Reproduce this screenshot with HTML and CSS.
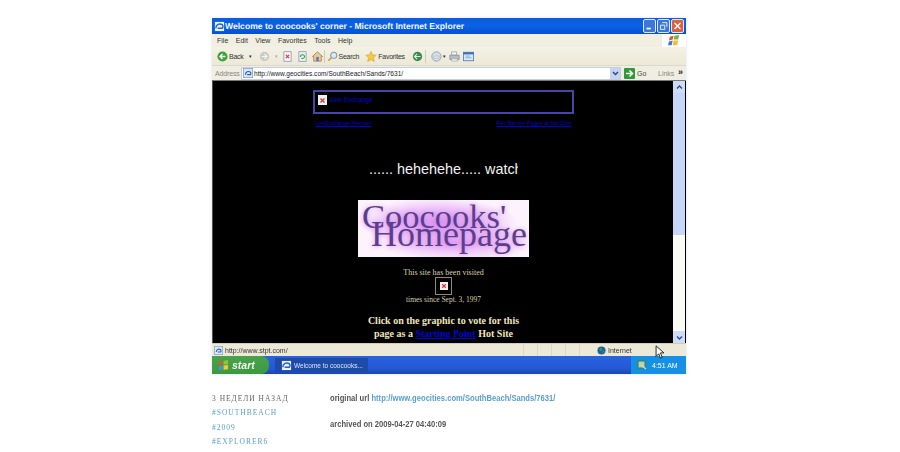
FILE: index.html
```html
<!DOCTYPE html>
<html lang="en">
<head>
<meta charset="utf-8">
<title>Welcome to coocooks' corner</title>
<link rel="stylesheet" href="styles.css">
</head>
<body>
<main class="post">
  <section class="window">
    <header class="titlebar">
      <svg class="ie ie-title" viewBox="0 0 12 12"><rect x="1" y="1" width="10" height="10" fill="#e8f0fa"/><path d="M2 8c0-4 4-6 7-4 1 1 1 3 0 4H4" fill="none" stroke="#2a62b8" stroke-width="1.6"/></svg>
      <span class="title-text">Welcome to coocooks' corner - Microsoft Internet Explorer</span>
      <span class="winbtns">
        <span class="winbtn"><svg viewBox="0 0 13 13"><rect x="3" y="8.5" width="5" height="2" fill="#fff"/></svg></span>
        <span class="winbtn"><svg viewBox="0 0 13 13"><path d="M5 2.500h5.500v5M3 5.500h5v5H3z" fill="none" stroke="#fff"/></svg></span>
        <span class="winbtn close"><svg viewBox="0 0 13 13"><path d="M3 3l7 7M10 3l-7 7" stroke="#fff" stroke-width="1.7"/></svg></span>
      </span>
    </header>
    <nav class="menubar">
      <span class="menu">File</span><span class="menu">Edit</span><span class="menu">View</span><span class="menu">Favorites</span><span class="menu">Tools</span><span class="menu">Help</span>
      <span class="flagbox"><svg viewBox="0 0 14 14"><path d="M2 3l4-1-1 4-4 1z" fill="#e2572a"/><path d="M7 2l5-1-1 5-5 0z" fill="#7cb53c"/><path d="M1 8l4-1-1 5-4 0z" fill="#3f7ad0"/><path d="M6 7l5 0-1 5-5 0z" fill="#f0c030"/></svg></span>
    </nav>
    <div class="toolbar">
      <svg class="tool-ic" viewBox="0 0 13 13"><circle cx="6.500" cy="6.500" r="6" fill="#3da23a"/><path d="M10 6.500H4M6.500 3.500l-3 3 3 3" fill="none" stroke="#fff" stroke-width="1.600"/></svg>
      <span class="tool-label back-label">Back</span><span class="caret back-caret">▾</span>
      <svg class="tool-ic fwd" viewBox="0 0 13 13"><circle cx="6.500" cy="6.500" r="5.500" fill="#c9cbc6"/><path d="M3 6.500h6M6.500 3.500l3 3-3 3" fill="none" stroke="#f4f4f0" stroke-width="1.400"/></svg>
      <span class="caret dim">▾</span>
      <svg class="tool-ic doc stop" viewBox="0 0 11 13"><path d="M1 .5h9v12H1z" fill="#f4f3f6" stroke="#8d9ab8"/><path d="M3.500 4.500l4 4M7.500 4.500l-4 4" stroke="#d83838" stroke-width="1.400"/></svg>
      <svg class="tool-ic doc refresh" viewBox="0 0 11 13"><path d="M1 .5h9v12H1z" fill="#e8f0ea" stroke="#8d9ab8"/><path d="M3 7a2.600 2.600 0 0 1 5-1M8 6a2.600 2.600 0 0 1-4 2.500" fill="none" stroke="#2f9c48" stroke-width="1.300"/></svg>
      <svg class="tool-ic home" viewBox="0 0 13 13"><path d="M.5 6.500 6.500 1l6 5.500H11V12H2V6.500z" fill="#e9c9a0" stroke="#b87b45"/><rect x="5" y="7" width="3" height="5" fill="#4d7fc4"/></svg>
      <i class="sep sep-a"></i>
      <svg class="tool-ic search" viewBox="0 0 13 13"><circle cx="8" cy="5" r="3.600" fill="#dbe9f6" stroke="#7b93b5" stroke-width="1.200"/><path d="M5.500 7.500L1.500 11.500" stroke="#c8a24e" stroke-width="2"/></svg>
      <span class="tool-label">Search</span>
      <svg class="tool-ic star" viewBox="0 0 13 13"><path d="M6.500.5l1.900 4 4.300.5-3.200 3 .9 4.400-3.900-2.200-3.900 2.200.9-4.400-3.200-3 4.300-.5z" fill="#f4cc3a" stroke="#c9982a" stroke-width=".6"/></svg>
      <span class="tool-label">Favorites</span>
      <svg class="tool-ic media" viewBox="0 0 13 13"><circle cx="6.500" cy="6.500" r="5.500" fill="#3f8a50"/><path d="M3 6.500h7M6 3.500l-3 3 3 3" fill="none" stroke="#dfeedd" stroke-width="1.300"/></svg>
      <i class="sep sep-b"></i>
      <svg class="tool-ic mail" viewBox="0 0 13 13"><circle cx="6.500" cy="6.500" r="5.500" fill="#d6dfe8" stroke="#8b9ab0"/><path d="M3.500 6h6v2.500h-6z" fill="#f6f2e4" stroke="#94a2b8" stroke-width=".6"/></svg>
      <span class="caret mail-caret">▾</span>
      <svg class="tool-ic print" viewBox="0 0 13 13"><path d="M3 1h6v4H3z" fill="#f4f4f4" stroke="#a0a8b4"/><path d="M1 5h11v5H1z" fill="#b8bcc6" stroke="#8a8f9b"/><path d="M3 9h7v3H3z" fill="#e9e9e9" stroke="#9a9a9a" stroke-width=".6"/></svg>
      <svg class="tool-ic edit" viewBox="0 0 13 13"><rect x=".5" y="1.500" width="12" height="10" fill="#dbe7f5" stroke="#4f7cb8"/><rect x=".5" y="1.500" width="12" height="2.500" fill="#3a6fbc"/><path d="M3 6h5M3 8h7" stroke="#7fa0ca"/></svg>
    </div>
    <div class="addressbar">
      <span class="addr-label">Address</span>
      <div class="addr-field">
        <svg class="ie ie-addr" viewBox="0 0 12 12"><rect x=".5" y=".5" width="11" height="11" fill="#dbe8f8" stroke="#8aa5cc"/><path d="M3 8c0-3 3-5 6-3 .6 1 .5 2 0 3H5" fill="none" stroke="#2a62b8" stroke-width="1.400"/></svg>
        <span class="addr-url">http://www.geocities.com/SouthBeach/Sands/7631/</span>
        <span class="addr-drop"><svg viewBox="0 0 9 9"><path d="M2 3l2.500 2.500L7 3" fill="none" stroke="#2b4a8a" stroke-width="1.500"/></svg></span>
      </div>
      <svg class="go-ic" viewBox="0 0 11 11"><rect width="11" height="11" rx="1" fill="#2f9a3a"/><path d="M2 5.500h6M5.500 2.500l3 3-3 3" fill="none" stroke="#fff" stroke-width="1.500"/></svg>
      <span class="go-label">Go</span>
      <span class="links">Links</span>
      <span class="chev">»</span>
    </div>
    <div class="viewport">
      <div class="page">
        <div class="banner">
          <span class="broken"><svg viewBox="0 0 9 9"><path d="M2.500 2.500l4 4M6.500 2.500l-4 4" stroke="#e2303a" stroke-width="1.300"/></svg></span>
          <a class="link small" href="#">Link Exchange</a>
        </div>
        <div class="banner-links">
          <a class="link tiny" href="#">LinkExchange Member</a>
          <a class="link tiny" href="#">Rev Banner Pages at Sw Click</a>
        </div>
        <p class="marquee">...... hehehehe..... watch</p>
        <div class="logo">
          <span class="logo-a">Coocooks'</span>
          <span class="logo-b">Homepage</span>
        </div>
        <p class="visited">This site has been visited</p>
        <span class="counter"><span class="broken inner"><svg viewBox="0 0 9 9"><path d="M2.500 2.500l4 4M6.500 2.500l-4 4" stroke="#e2303a" stroke-width="1.300"/></svg></span></span>
        <p class="since">times since Sept. 3, 1997</p>
        <p class="vote">Click on the graphic to vote for this<br>page as a <a class="link" href="#">Starting Point</a> Hot Site</p>
      </div>
      <aside class="scrollbar">
        <span class="sb-btn"><svg viewBox="0 0 9 9"><path d="M2 5.500L4.500 3 7 5.500" fill="none" stroke="#2b4a8a" stroke-width="1.400"/></svg></span>
        <span class="sb-thumb"></span>
        <span class="sb-track"></span>
        <span class="sb-btn"><svg viewBox="0 0 9 9"><path d="M2 3.500L4.500 6 7 3.500" fill="none" stroke="#2b4a8a" stroke-width="1.400"/></svg></span>
      </aside>
    </div>
    <footer class="statusbar">
      <svg class="ie ie-status" viewBox="0 0 12 12"><rect x=".5" y=".5" width="11" height="11" fill="#dbe8f8" stroke="#8aa5cc"/><path d="M3 8c0-3 3-5 6-3 .6 1 .5 2 0 3H5" fill="none" stroke="#2a62b8" stroke-width="1.400"/></svg>
      <span class="status-url">http://www.stpt.com/</span>
      <span class="panes"><i></i><i></i><i></i><i></i><i></i></span>
      <svg class="globe" viewBox="0 0 10 10"><circle cx="5" cy="5" r="4.500" fill="#1f5fa8"/><path d="M2 3l3-1 1 2-2 2zM6 6l2-1 0 2-2 1z" fill="#3c9a40"/></svg>
      <span class="zone">Internet</span>
      <svg class="cursor" viewBox="0 0 11 16"><path d="M1 1v12l3-3 2 5 2-1-2-5h4z" fill="#fff" stroke="#111" stroke-width="1"/></svg>
    </footer>
    <div class="taskbar">
      <span class="start"><svg viewBox="0 0 12 12"><path d="M1 2l4-1v4l-4 .5z" fill="#e2572a"/><path d="M6 1l5-1v4.500l-5 .5z" fill="#8cc63f"/><path d="M1 6.500l4-.5v4.500l-4 .5z" fill="#4a8fe0"/><path d="M6 6l5-.5V10l-5 .5z" fill="#f6c732"/></svg><span class="start-label">start</span></span>
      <span class="task"><svg class="ie ie-task" viewBox="0 0 12 12"><rect x="1" y="1" width="10" height="10" fill="#e8f0fa"/><path d="M2 8c0-4 4-6 7-4 1 1 1 3 0 4H4" fill="none" stroke="#2a62b8" stroke-width="1.600"/></svg><span class="task-label">Welcome to coocooks...</span></span>
      <span class="tray"><svg viewBox="0 0 10 10"><rect x="1" y="1" width="7" height="7" fill="#b9d4a8" stroke="#3f7a4a"/><path d="M4 5l5 4" stroke="#d8d8d0" stroke-width="1.500"/></svg><span class="clock">4:51 AM</span></span>
    </div>
  </section>
  <section class="meta">
    <ul class="tags">
      <li class="age">3 НЕДЕЛИ НАЗАД</li>
      <li><a class="tag" href="#">#SOUTHBEACH</a></li>
      <li><a class="tag" href="#">#2009</a></li>
      <li><a class="tag" href="#">#EXPLORER6</a></li>
    </ul>
    <div class="caption">
      <p class="caption-line">original url <a class="url" href="#">http://www.geocities.com/SouthBeach/Sands/7631/</a></p>
      <p class="caption-line">archived on 2009-04-27 04:40:09</p>
    </div>
  </section>
</main>
</body>
</html>
```
FILE: styles.css
```css
html, body { margin: 0; padding: 0; background: #fff; }
body { height: 452px; overflow: hidden; }
p { margin: 0; }
svg { display: block; flex: none; }
a { color: inherit; }

.post { width: 474px; margin-left: 212px; padding-top: 18px; }

.window {
  width: 474px; height: 356px;
  display: flex; flex-direction: column;
  font-family: "Liberation Sans", sans-serif;
  box-shadow: 0 0 3px rgba(90,110,150,.22);
  filter: blur(.4px);
}

/* title bar */
.titlebar {
  height: 16px; flex: none; display: flex; align-items: center; padding: 0 2px 0 2px;
  background: linear-gradient(#0a5ee0, #0a62e4 50%, #0550d0);
}
.ie-title { width: 11px; height: 11px; }
.title-text {
  margin-left: 0; color: #f2f6ff; font: bold 8.600px "Liberation Sans", sans-serif;
  white-space: nowrap; text-rendering: geometricPrecision;
}
.winbtns { margin-left: auto; display: flex; gap: 1px; }
.winbtn {
  width: 13px; height: 14px; box-sizing: border-box; border: 1px solid #dfe8f8; border-radius: 2px;
  background: #3c78dc;
}
.winbtn svg { width: 11px; height: 12px; }
.close { background: #e0603a; }

/* menu */
.menubar {
  height: 13px; flex: none; display: flex; align-items: center; padding-left: 5px;
  background: #f1efe2; font-size: 7px; color: #333;
}
.menu { margin-right: 7.500px; }
.flagbox { margin-left: auto; width: 24px; height: 13px; background: #fff; display: flex; align-items: center; justify-content: center; }
.flagbox svg { width: 13px; height: 13px; }

/* toolbar */
.toolbar {
  height: 19px; flex: none; display: flex; align-items: center; padding-left: 5px;
  background: linear-gradient(#f4f2e6, #ece9d8); font-size: 7px; color: #333; letter-spacing: -.25px;
  box-sizing: border-box; border-bottom: 1px solid #dcd9c9;
}
.tool-ic { width: 11px; height: 11px; }
.tool-label { margin-left: 1px; white-space: nowrap; }
.caret { width: 4px; font-size: 5px; color: #222; flex: none; overflow: hidden; }
.back-caret { margin-left: 5px; }
.fwd { margin-left: 6px; }
.dim { color: #aaa; margin-left: 5px; }
.doc { width: 9px; }
.stop { margin-left: 4px; }
.refresh { margin-left: 6px; }
.home { margin-left: 5px; }
.sep { width: 1px; height: 13px; background: #cfccbc; flex: none; }
.sep-a { margin-left: 1px; }
.search { margin-left: 2px; }
.star { margin-left: 6px; width: 12px; }
.media { margin-left: 7px; }
.sep-b { margin-left: 2px; }
.mail { margin-left: 5px; }
.mail-caret { margin-left: 1px; }
.print { margin-left: 2px; }
.edit { margin-left: 3px; }

/* address */
.addressbar {
  height: 14px; flex: none; display: flex; align-items: center; padding-left: 3px;
  background: #f0eee2; font-size: 7px; color: #444;
}
.addr-label { color: #8a8a80; width: 25px; flex: none; letter-spacing: -.15px; }
.addr-field {
  width: 380px; flex: none; height: 13px; margin-left: 1px; display: flex; align-items: center;
  background: #fff; box-sizing: border-box; border: 1px solid #c5cfdc; padding-left: 1px;
}
.ie-addr { width: 10px; height: 10px; }
.addr-url { margin-left: 1px; color: #222; white-space: nowrap; font-size: 6.600px; }
.addr-drop { margin-left: auto; width: 10px; height: 11px; background: #c6d5ef; display: flex; align-items: center; justify-content: center; }
.addr-drop svg { width: 9px; height: 9px; }
.go-ic { margin-left: 3px; width: 11px; height: 11px; }
.go-label { margin-left: 2px; width: 8px; flex: none; }
.links { margin-left: 13px; width: 14px; flex: none; color: #8a8a80; }
.chev { margin-left: 6px; font-size: 9px; font-weight: bold; color: #222; line-height: 8px; margin-top: -3px; }

/* page */
.viewport { height: 263px; flex: none; display: flex; background: #000; border-top: 1px solid #7c7a70; box-sizing: border-box; border-left: 1px solid #555; }
.page {
  flex: 1; min-width: 0; display: flex; flex-direction: column; align-items: center;
  font-family: "Liberation Serif", serif; color: #e9dfb8; overflow: hidden; padding-left: 1px;
}
.banner {
  width: 261px; height: 24px; margin-top: 9px; box-sizing: border-box;
  border: 2px solid #4a45a4; display: flex; align-items: flex-start; padding: 3px 0 0 3px; flex: none;
}
.broken {
  width: 9px; height: 10px; background: #f2f0ee; flex: none; display: flex; align-items: center; justify-content: center;
}
.broken svg { width: 9px; height: 9px; }
.link { color: #0000d8; }
.small { font-family: "Liberation Sans", sans-serif; font-size: 6.500px; line-height: 9px; }
.tiny { font-family: "Liberation Sans", sans-serif; font-size: 5.500px; line-height: 8px; }
.banner .link { margin-left: 3px; text-decoration: none; }
.banner-links { width: 256px; display: flex; justify-content: space-between; margin-top: 5px; flex: none; }
.marquee {
  margin-top: 33px; width: 149px; height: 18px; overflow: hidden; color: #f2f2f2;
  font: 14.400px/18px "Liberation Sans", sans-serif; white-space: nowrap; flex: none; text-align: left;
}
.logo {
  margin-top: 22px; width: 171px; height: 57px; flex: none; position: relative;
  background:
    radial-gradient(ellipse 80px 24px at 80px 22px, #dc98f2 0, rgba(232,180,246,.7) 60%, transparent 100%),
    radial-gradient(ellipse 80px 20px at 98px 42px, #e4a0f2 0, transparent 100%),
    #fdf3fd;
  font-family: "Liberation Serif", serif; color: #5a3f8c;
  text-shadow: 0 0 5px rgba(196,96,232,.6);
}
.logo-a { position: absolute; left: 4px; top: -4px; font-size: 34.500px; line-height: 40px; white-space: nowrap; }
.logo-b { position: absolute; left: 13px; top: 14px; font-size: 36px; line-height: 40px; white-space: nowrap; }
.visited { font-size: 8px; line-height: 9px; margin-top: 11px; flex: none; color: #d8d0b0; }
.counter {
  width: 17px; height: 18px; box-sizing: border-box; border: 1px solid #8a8a80; margin-top: 0;
  display: flex; align-items: center; justify-content: center; flex: none;
}
.inner { width: 8px; height: 8px; }
.inner svg { width: 8px; height: 8px; }
.since { font-size: 7.500px; line-height: 9px; margin-top: 0; flex: none; color: #d8d0b0; }
.vote { font-size: 10px; line-height: 12.500px; font-weight: bold; text-align: center; margin-top: 11px; flex: none; color: #efe6bd; }

/* scrollbar */
.scrollbar { width: 12px; margin-right: 1px; flex: none; display: flex; flex-direction: column; background: #fbfbf6; }
.sb-btn { height: 12px; background: #cfdcf6; display: flex; align-items: center; justify-content: center; flex: none; }
.sb-btn svg { width: 9px; height: 9px; }
.sb-thumb { height: 142px; background: #c6d6f8; flex: none; }
.sb-track { flex: 1; background: #fbfbf6; }

/* status */
.statusbar {
  height: 13px; flex: none; display: flex; align-items: center; padding-left: 2px; position: relative;
  background: #ece9d8; font-size: 7px; color: #333; box-sizing: border-box; border-top: 1px solid #cfccbc;
}
.ie-status { width: 9px; height: 9px; }
.status-url { margin-left: 2px; width: 286px; flex: none; }
.panes { display: flex; margin-left: 12px; height: 12px; flex: none; }
.panes i { width: 14px; border-left: 1px solid #dcd9c8; box-sizing: border-box; }
.globe { margin-left: 4px; width: 9px; height: 9px; }
.zone { margin-left: 2px; }
.cursor { position: absolute; left: 443px; top: 1px; width: 10px; height: 14px; }

/* taskbar */
.taskbar {
  height: 18px; flex: none; display: flex; align-items: center;
  background: linear-gradient(#2a62de, #2458d6 70%, #1c46b0); color: #fff;
}
.start {
  width: 57px; height: 18px; flex: none; display: flex; align-items: center; padding-left: 6px; box-sizing: border-box;
  background: linear-gradient(#4aa24a, #3a9a3e); border-radius: 0 8px 8px 0;
}
.start svg { width: 11px; height: 11px; }
.start-label { margin-left: 3px; font: italic bold 10.500px "Liberation Sans", sans-serif; color: #f4f8f0; }
.task {
  width: 93px; height: 14px; margin-left: 6px; flex: none; display: flex; align-items: center; padding-left: 6px; box-sizing: border-box;
  background: #1e4aa8; font-size: 6.500px; color: #d8e4f8;
}
.ie-task { width: 11px; height: 11px; }
.task-label { margin-left: 2px; white-space: nowrap; }
.tray {
  margin-left: auto; width: 55px; height: 18px; flex: none; display: flex; align-items: center; padding-left: 6px; box-sizing: border-box;
  background: #1690e4; font-size: 7px;
}
.tray svg { width: 10px; height: 10px; }
.clock { margin-left: 5px; white-space: nowrap; }

/* below */
.meta { display: flex; margin-top: 18px; filter: blur(.3px); }
.tags {
  list-style: none; margin: 0; padding: 0; width: 118px; flex: none;
  font: 7.500px/14.300px "Liberation Serif", serif; letter-spacing: 1px;
}
.age { color: #666; }
.tag { color: #5a9fd0; text-decoration: none; }
.caption { font: bold 9px/11px "Liberation Sans", sans-serif; color: #555; padding-top: 1px; transform: scaleX(.845); transform-origin: left top; }
.caption-line { margin-bottom: 15px; white-space: nowrap; }
.url { color: #5a9fd0; text-decoration: none; }
```
